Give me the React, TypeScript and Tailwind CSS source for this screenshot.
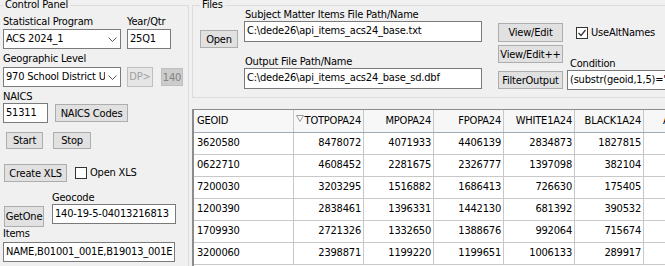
import React from "react";

const font = "font-['DejaVu_Sans_Condensed','Liberation_Sans',sans-serif] tracking-[-0.2px]";

function Btn({ label, className = "", disabled = false }: { label: string; className?: string; disabled?: boolean }) {
  return (
    <div
      className={
        "shrink-0 flex items-center justify-center border text-[11px] leading-none whitespace-nowrap " +
        (disabled ? "bg-[#cccccc] border-[#bfbfbf] text-[#838383] " : "bg-[#e1e1e1] border-[#adadad] text-black ") +
        className
      }
    >
      {label}
    </div>
  );
}

function TextBox({ value, className = "" }: { value: string; className?: string }) {
  return (
    <div className={"shrink-0 flex items-center bg-white border border-[#7a7a7a] pl-[2px] overflow-hidden whitespace-nowrap text-[11px] text-black " + className}>
      {value}
    </div>
  );
}

function Combo({ value }: { value: string }) {
  return (
    <div className="shrink-0 flex items-center bg-white border border-[#7a7a7a] pl-[2px] w-[118px] h-[20px] text-[11px] whitespace-nowrap overflow-hidden">
      <span className="flex-1 overflow-hidden">{value}</span>
      <svg width="9" height="5" viewBox="0 0 9 5" className="mx-[3px] shrink-0">
        <path d="M0.5 0.5 L4.5 4.5 L8.5 0.5" fill="none" stroke="#555" strokeWidth="1" />
      </svg>
    </div>
  );
}

function Check({ checked }: { checked: boolean }) {
  return (
    <div className="w-[12px] h-[12px] bg-white border border-[#333] flex items-center justify-center shrink-0">
      {checked && (
        <svg width="10" height="10" viewBox="0 0 10 10">
          <path d="M1.5 5 L4 7.5 L8.5 2" fill="none" stroke="#333" strokeWidth="1.2" />
        </svg>
      )}
    </div>
  );
}

const Label = ({ children, className = "" }: { children: React.ReactNode; className?: string }) => (
  <div className={"shrink-0 text-[11px] leading-[13px] h-[13px] whitespace-nowrap " + className}>{children}</div>
);

const columns = [
  { name: "GEOID", w: "w-[100px]", left: true },
  { name: "TOTPOPA24", w: "w-[70px]", sort: true },
  { name: "MPOPA24", w: "w-[70px]" },
  { name: "FPOPA24", w: "w-[70px]" },
  { name: "WHITE1A24", w: "w-[71px]" },
  { name: "BLACK1A24", w: "w-[69px]" },
  { name: "AIAN1A24", w: "w-[70px]" },
];

const rows = [
  ["3620580", "8478072", "4071933", "4406139", "2834873", "1827815", ""],
  ["0622710", "4608452", "2281675", "2326777", "1397098", "382104", ""],
  ["7200030", "3203295", "1516882", "1686413", "726630", "175405", ""],
  ["1200390", "2838461", "1396331", "1442130", "681392", "390532", ""],
  ["1709930", "2721326", "1332650", "1388676", "992064", "715674", ""],
  ["3200060", "2398871", "1199220", "1199651", "1006133", "289917", ""],
];

function LeftPanel() {
  return (
    <div className="w-[192px] shrink-0 h-full">
      <div className="relative mt-[5px] w-[189px] h-[300px] border-t border-r border-[#dcdcdc] pl-[3px]">
        <div className="absolute -top-[8px] left-[3px] px-[2px] bg-[#f0f0f0] text-[11px] leading-[13px]">Control Panel</div>
        <div className="flex mt-[9px]">
          <Label className="w-[124px]">Statistical Program</Label>
          <Label>Year/Qtr</Label>
        </div>
        <div className="flex mt-[1px]">
          <Combo value="ACS 2024_1" />
          <TextBox value="25Q1" className="ml-[6px] w-[44px] h-[20px]" />
        </div>
        <Label className="mt-[3px]">Geographic Level</Label>
        <div className="flex items-start mt-[2px]">
          <Combo value="970 School District U" />
          <div className="shrink-0 ml-[6px] w-[26px] h-[20px] flex items-center justify-center border border-[#bfbfbf] bg-[#e6e6e6] text-[#a0a0a0] text-[11px]">DP&gt;</div>
          <Btn label="140" disabled className="ml-[8px] mt-[1px] w-[22px] h-[18px]" />
        </div>
        <Label className="mt-[3px]">NAICS</Label>
        <div className="flex items-center">
          <TextBox value="51311" className="w-[45px] h-[20px]" />
          <Btn label="NAICS Codes" className="ml-[7px] w-[73px] h-[18px]" />
        </div>
        <div className="flex mt-[9px] ml-[3px]">
          <Btn label="Start" className="w-[37px] h-[17px]" />
          <Btn label="Stop" className="ml-[10px] w-[38px] h-[17px]" />
        </div>
        <div className="flex items-center mt-[15px] ml-[1px]">
          <Btn label="Create XLS" className="w-[63px] h-[18px]" />
          <div className="ml-[8px]">
            <Check checked={false} />
          </div>
          <span className="ml-[3px] text-[11px]">Open XLS</span>
        </div>
        <div className="flex mt-[9px]">
          <Btn label="GetOne" className="ml-[1px] mt-[15px] w-[40px] h-[21px]" />
          <div className="ml-[8px]">
            <Label>Geocode</Label>
            <TextBox value="140-19-5-04013216813" className="w-[124px] h-[20px]" />
          </div>
        </div>
        <Label>Items</Label>
        <TextBox value="NAME,B01001_001E,B19013_001E" className="mt-[2px] w-[172px] h-[20px]" />
        <Label className="mt-[2px]">ACS Metadata Summary</Label>
      </div>
    </div>
  );
}

function FilesGroup() {
  return (
    <div className="relative shrink-0 mt-[5px] h-[93px] border-t border-l border-b border-[#dcdcdc] flex">
      <div className="absolute -top-[8px] left-[7px] px-[2px] bg-[#f0f0f0] text-[11px] leading-[13px]">Files</div>
      <Btn label="Open" className="ml-[7px] mt-[24px] w-[38px] h-[18px]" />
      <div className="shrink-0 ml-[6px] flex flex-col">
        <Label className="mt-[2px] ml-[1px]">Subject Matter Items File Path/Name</Label>
        <TextBox value="C:\dede26\api_items_acs24_base.txt" className="w-[238px] h-[21px]" />
        <Label className="mt-[13px] ml-[1px]">Output File Path/Name</Label>
        <TextBox value="C:\dede26\api_items_acs24_base_sd.dbf" className="w-[238px] h-[21px]" />
      </div>
      <div className="shrink-0 ml-[16px] flex flex-col">
        <Btn label="View/Edit" className="mt-[17px] w-[65px] h-[19px]" />
        <Btn label="View/Edit++" className="mt-[3px] w-[65px] h-[18px]" />
        <Btn label="FilterOutput" className="mt-[8px] w-[65px] h-[18px]" />
      </div>
      <div className="shrink-0 ml-[4px] flex flex-col">
        <div className="flex items-center mt-[20px] ml-[9px] h-[13px]">
          <Check checked />
          <span className="ml-[3px] text-[11px] leading-[13px]">UseAltNames</span>
        </div>
        <Label className="mt-[18px] ml-[3px]">Condition</Label>
        <TextBox value="(substr(geoid,1,5)='36205')" className="w-[120px] h-[20px]" />
      </div>
    </div>
  );
}

function DataTable() {
  return (
    <div className="mt-[11px] border-t border-l-2 border-[#8c8c8c] bg-white flex-1 overflow-hidden">
      <div className="flex h-[23px] bg-[#f7f7f7] border-b border-[#a0a8b4]">
        {columns.map((c) => (
          <div
            key={c.name}
            className={
              c.w +
              " relative shrink-0 h-full border-r border-[#c8c8c8] flex items-center text-[11px] whitespace-nowrap overflow-hidden " +
              (c.left ? "pl-[3px]" : "justify-end pr-[2px]")
            }
          >
            {c.sort && (
              <svg width="8" height="7" viewBox="0 0 8 7" className="absolute left-[2px] top-[5px]">
                <path d="M0.5 0.5 L7.5 0.5 L4 6.5 Z" fill="none" stroke="#999" strokeWidth="1" />
              </svg>
            )}
            {c.name}
          </div>
        ))}
      </div>
      {rows.map((r, i) => (
        <div key={i} className="flex h-[22px] border-b border-[#c8c8c8]">
          {r.map((v, j) => (
            <div
              key={j}
              className={
                columns[j].w +
                " shrink-0 h-full border-r border-[#c8c8c8] flex items-center text-[11px] " +
                (j === 0 ? "pl-[3px]" : "justify-end pr-[2px]")
              }
            >
              {v}
            </div>
          ))}
        </div>
      ))}
    </div>
  );
}

export default function App() {
  return (
    <div className={"w-[665px] h-[266px] bg-[#f0f0f0] overflow-hidden flex text-black " + font}>
      <LeftPanel />
      <div className="flex-1 flex flex-col min-w-0 overflow-hidden">
        <FilesGroup />
        <DataTable />
      </div>
    </div>
  );
}
